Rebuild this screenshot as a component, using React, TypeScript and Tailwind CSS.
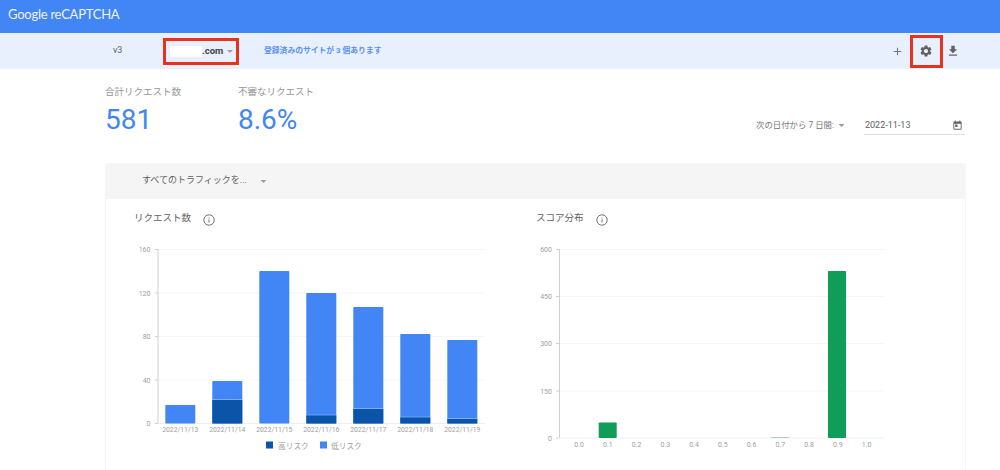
const font = 'font-["Roboto","Noto_Sans_CJK_JP",sans-serif]'

const requests = [
  { date: '2022/11/13', top: 405, dark: 0 },
  { date: '2022/11/14', top: 381, dark: 400 },
  { date: '2022/11/15', top: 271, dark: 0 },
  { date: '2022/11/16', top: 293, dark: 415.5 },
  { date: '2022/11/17', top: 307, dark: 409 },
  { date: '2022/11/18', top: 334, dark: 417.5 },
  { date: '2022/11/19', top: 340, dark: 419 },
]

const scoreBars = [
  { x: 598.7, top: 422.5 },
  { x: 771, top: 437, light: true },
  { x: 828, top: 271 },
]

const Caret = ({ className }: { className: string }) => (
  <svg viewBox="0 0 8 4" className={className}>
    <path d="M0 0h8L4 4z" fill="#9e9e9e" />
  </svg>
)

const Info = () => (
  <svg viewBox="0 0 12 12" className="mt-[3px] h-3 w-3">
    <circle cx="6" cy="6" r="5.2" fill="none" stroke="#616161" strokeWidth="0.9" />
    <path d="M6 5.3v3.2M6 3.4v1" stroke="#616161" strokeWidth="0.9" />
  </svg>
)

const Icon = ({ d, className }: { d: string; className: string }) => (
  <svg viewBox="0 0 24 24" className={className} fill="currentColor">
    <path d={d} />
  </svg>
)

const RequestChart = () => (
  <svg viewBox="106 240 402 230" className="block h-[230px] w-[402px]">
    {[249.5, 293, 336.5, 380].map((y) => (
      <line key={y} x1="158" x2="485" y1={y} y2={y} stroke="#f5f5f5" />
    ))}
    <line x1="158" x2="158" y1="249" y2="423.5" stroke="#d0d0d0" />
    <line x1="158" x2="485" y1="423.5" y2="423.5" stroke="#eeeeee" />
    {[['160', 249.5], ['120', 293], ['80', 336.5], ['40', 380], ['0', 423.5]].map(([t, y]) => (
      <g key={t}>
        <line x1="155" x2="158" y1={y} y2={y} stroke="#d0d0d0" />
        <text x="150.5" y={Number(y) + 2.5} textAnchor="end" fontSize="7" fill="#9e9e9e">{t}</text>
      </g>
    ))}
    {requests.map((r, i) => {
      const x = 165.3 + i * 47
      return (
        <g key={r.date}>
          <rect x={x} y={r.top} width="30" height={423.5 - r.top} rx="0.8" fill="#4285f4" />
          {r.dark > 0 && (
            <>
              <rect x={x} y={r.dark - 0.8} width="30" height="0.8" fill="#8ab4f8" />
              <rect x={x} y={r.dark} width="30" height={423.5 - r.dark} fill="#0b55a8" />
            </>
          )}
          <text x={x + 15} y="431.5" textAnchor="middle" fontSize="6.8" fill="#9e9e9e">{r.date}</text>
        </g>
      )
    })}
    <rect x="266" y="441.5" width="7" height="7" fill="#0b55a8" />
    <text x="278" y="448.5" fontSize="7.7" fill="#9e9e9e">高リスク</text>
    <rect x="320" y="441.5" width="7" height="7" fill="#4285f4" />
    <text x="331" y="448.5" fontSize="7.7" fill="#9e9e9e">低リスク</text>
  </svg>
)

const ScoreChart = () => (
  <svg viewBox="508 240 457 230" className="block h-[230px] w-[457px]">
    {[249.5, 296.5, 343.5, 391].map((y) => (
      <line key={y} x1="559" x2="884" y1={y} y2={y} stroke="#f5f5f5" />
    ))}
    <line x1="559.5" x2="559.5" y1="249" y2="438" stroke="#d0d0d0" />
    <line x1="559" x2="884" y1="438" y2="438" stroke="#eeeeee" />
    {[['600', 249.5], ['450', 296.5], ['300', 343.5], ['150', 391], ['0', 438]].map(([t, y]) => (
      <g key={t}>
        <line x1="556" x2="559" y1={y} y2={y} stroke="#d0d0d0" />
        <text x="552" y={Number(y) + 2.5} textAnchor="end" fontSize="7" fill="#9e9e9e">{t}</text>
      </g>
    ))}
    {scoreBars.map((b) => (
      <rect key={b.x} x={b.x} y={b.top} width="18" height={438 - b.top} rx="0.8" fill={b.light ? '#a8d5bb' : '#0f9d58'} />
    ))}
    {['0.0', '0.1', '0.2', '0.3', '0.4', '0.5', '0.6', '0.7', '0.8', '0.9', '1.0'].map((t, i) => (
      <text key={t} x={579 + i * 28.75} y="447" textAnchor="middle" fontSize="7" fill="#9e9e9e">{t}</text>
    ))}
  </svg>
)

export default function App() {
  return (
    <div className={`${font} h-[470px] overflow-hidden bg-white`}>
      <div className='flex h-[33px] items-center bg-[#4285f4] pb-[3px] pl-2 font-["Lato",sans-serif] text-[13px] tracking-[-0.25px] text-[#eef3fe]'>
        Google reCAPTCHA
      </div>

      <div className="flex h-[36px] items-center bg-[#e8f0fe] pl-[113px]">
        <div className="w-[50px] text-[9px] text-[#616161]">v3</div>
        <div className="relative flex h-[27px] w-[76px] items-center">
          <div className="ml-[7px] h-[11px] w-[32px] bg-white" />
          <span className="text-[9.5px] font-bold text-[#424242]">.com</span>
          <Caret className="ml-[4px] h-[3px] w-[6px]" />
          <div className="absolute inset-0 border-[3px] border-[#e8321e]" />
        </div>
        <div className="ml-[25px] text-[7.8px] font-bold text-[#5a92f5]">登録済みのサイトが 3 個あります</div>
        <div className="ml-auto flex items-center pr-[40px] text-[#757575]">
          <Icon className="h-[13px] w-[13px]" d="M19 13h-6v6h-2v-6H5v-2h6V5h2v6h6v2z" />
          <div className="relative ml-[6px] mr-[3px] flex h-[33px] w-[33px] items-center justify-center pr-[2px]">
            <Icon className="h-[14px] w-[14px] text-[#616161]" d="M19.14 12.94c.04-.3.06-.61.06-.94 0-.32-.02-.64-.07-.94l2.03-1.58c.18-.14.23-.41.12-.61l-1.92-3.32c-.12-.22-.37-.29-.59-.22l-2.39.96c-.5-.38-1.03-.7-1.62-.94l-.36-2.54c-.04-.24-.24-.41-.48-.41h-3.84c-.24 0-.43.17-.47.41l-.36 2.54c-.59.24-1.13.57-1.62.94l-2.39-.96c-.22-.08-.47 0-.59.22L2.74 8.87c-.12.21-.08.47.12.61l2.03 1.58c-.05.3-.09.63-.09.94s.02.64.07.94l-2.03 1.58c-.18.14-.23.41-.12.61l1.92 3.32c.12.22.37.29.59.22l2.39-.96c.5.38 1.03.7 1.62.94l.36 2.54c.05.24.24.41.48.41h3.84c.24 0 .44-.17.47-.41l.36-2.54c.59-.24 1.13-.56 1.62-.94l2.39.96c.22.08.47 0 .59-.22l1.92-3.32c.12-.22.07-.47-.12-.61l-2.01-1.58zM12 15.6c-1.98 0-3.6-1.62-3.6-3.6s1.62-3.6 3.6-3.6 3.6 1.62 3.6 3.6-1.62 3.6-3.6 3.6z" />
            <div className="absolute inset-0 border-[3px] border-[#e8321e]" />
          </div>
          <Icon className="h-[14px] w-[14px] text-[#616161]" d="M19 9h-4V3H9v6H5l7 7 7-7zM5 18v2h14v-2H5z" />
        </div>
      </div>

      <div className="flex h-[94px] pl-[105px] pr-[35px] pt-[16px]">
        <div className="w-[133px]">
          <div className="text-[9.5px] leading-[14px] text-[#959595]">合計リクエスト数</div>
          <div className="mt-[3px] text-[28px] leading-[36px] text-[#4285f4]">581</div>
        </div>
        <div>
          <div className="text-[9.5px] leading-[14px] text-[#959595]">不審なリクエスト</div>
          <div className="mt-[3px] text-[28px] leading-[36px] text-[#4285f4]">8.6%</div>
        </div>
        <div className="ml-auto mt-[30px] flex h-[20px] items-center">
          <span className="text-[8.4px] text-[#757575]">次の日付から 7 日間:</span>
          <Caret className="ml-[4px] h-[3px] w-[7px]" />
          <div className="ml-[19px] flex h-[20px] w-[101px] items-center border-b border-[#e0e0e0] pl-px pr-[2px] pt-[2px]">
            <span className="text-[9px] text-[#616161]">2022-11-13</span>
            <Icon className="ml-auto h-[11px] w-[11px] text-[#616161]" d="M19 3h-1V1h-2v2H8V1H6v2H5c-1.11 0-1.99.9-1.99 2L3 19c0 1.1.89 2 2 2h14c1.1 0 2-.9 2-2V5c0-1.1-.9-2-2-2zm0 16H5V8h14v11zM7 10h5v5H7z" />
          </div>
        </div>
      </div>

      <div className="ml-[105px] w-[861px] border-x border-[#f5f5f5]">
        <div className="flex h-[36px] items-center rounded-t bg-[#f5f5f5] pl-[36px]">
          <span className="text-[9px] text-[#616161]">すべてのトラフィックを...</span>
          <Caret className="ml-[13px] h-[3px] w-[7px]" />
        </div>
        <div className="flex">
          <div className="w-[402px]">
            <div className="mb-[15px] mt-[12px] flex h-[14px] items-center pl-[28px]">
              <span className="text-[9.5px] text-[#616161]">リクエスト数</span>
              <span className="ml-[12px]"><Info /></span>
            </div>
            <RequestChart />
          </div>
          <div className="w-[457px]">
            <div className="mb-[15px] mt-[12px] flex h-[14px] items-center pl-[28px]">
              <span className="text-[9.5px] text-[#616161]">スコア分布</span>
              <span className="ml-[12px]"><Info /></span>
            </div>
            <ScoreChart />
          </div>
        </div>
      </div>
    </div>
  )
}
